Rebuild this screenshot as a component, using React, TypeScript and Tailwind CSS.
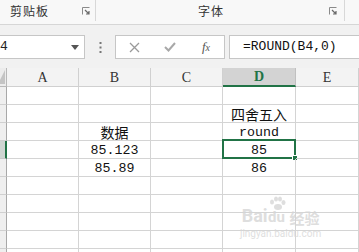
import React from 'react';

const cjk = { fontFamily: '"Noto Sans CJK SC", "Noto Sans", sans-serif' };
const mono = { fontFamily: '"Liberation Mono", "Noto Sans CJK SC", monospace' };
const serif = { fontFamily: '"Liberation Serif", "Noto Sans CJK SC", serif' };

type Cell = { text: string; cjk?: boolean };
const rows: { B?: Cell; D?: Cell }[] = [
  {},
  { D: { text: '四舍五入', cjk: true } },
  { B: { text: '数据', cjk: true }, D: { text: 'round' } },
  { B: { text: '85.123' }, D: { text: '85' } },
  { B: { text: '85.89' }, D: { text: '86' } },
  {},
  {},
  {},
  {},
  {},
];

function Launcher() {
  return (
    <svg width="8" height="8" viewBox="0 0 8 8" className="shrink-0">
      <path d="M0.5 7.5V0.5H7.5" fill="none" stroke="#8a8a8a" strokeWidth="1" />
      <path d="M3 3L7 7M7 4V7H4" fill="none" stroke="#6a6a6a" strokeWidth="1.2" />
    </svg>
  );
}

function CellText({ cell }: { cell?: Cell }) {
  if (!cell) return null;
  return (
    <span
      className={cell.cjk ? 'text-[14px] leading-[16px] text-[#111]' : 'text-[13.3px] leading-[15px] text-[#111]'}
      style={cell.cjk ? cjk : mono}
    >
      {cell.text}
    </span>
  );
}

export default function App() {
  return (
    <div className="w-[359px] h-[252px] overflow-hidden bg-white relative">
      {/* Ribbon group labels */}
      <div className="h-[25px] flex bg-[#f8f8f8] border-b border-[#d6d6d6]">
        <div className="w-[96px] h-[21px] flex items-center pl-[10px] pr-[5px] border-r border-[#d8d8d8]">
          <span className="text-[12px] text-[#333] tracking-[1px] flex-1" style={cjk}>剪贴板</span>
          <Launcher />
        </div>
        <div className="w-[249px] h-[21px] flex items-center pl-[102px] pr-[7px] border-r border-[#d8d8d8]">
          <span className="text-[12px] text-[#333] tracking-[1px] flex-1" style={cjk}>字体</span>
          <Launcher />
        </div>
      </div>

      {/* Formula bar */}
      <div className="h-[43px] bg-[#f1f1f1] flex items-start pt-[10px]">
        <div className="w-[85px] h-[24px] bg-white border border-[#c6c6c6] border-l-0 flex items-center justify-between pr-[5px]">
          <span className="text-[13px] text-[#222]" style={mono}>4</span>
          <svg width="8" height="5" viewBox="0 0 8 5"><path d="M0 0H8L4 5Z" fill="#555" /></svg>
        </div>
        <div className="w-[30px] h-[24px] flex items-center justify-center">
          <svg width="3" height="11" viewBox="0 0 3 11">
            <rect x="0.5" y="0" width="2" height="2" fill="#777" />
            <rect x="0.5" y="4.5" width="2" height="2" fill="#777" />
            <rect x="0.5" y="9" width="2" height="2" fill="#777" />
          </svg>
        </div>
        <div className="w-[110px] h-[24px] bg-white border border-[#c6c6c6] flex items-center">
          <div className="w-[36px] flex justify-center">
            <svg width="11" height="11" viewBox="0 0 11 11"><path d="M1 1L10 10M10 1L1 10" stroke="#9a9a9a" strokeWidth="1.3" /></svg>
          </div>
          <div className="w-[36px] flex justify-center">
            <svg width="12" height="10" viewBox="0 0 12 10"><path d="M1 5L4.5 8.5L11 1" fill="none" stroke="#a8a8a8" strokeWidth="2" /></svg>
          </div>
          <div className="w-[36px] flex justify-center">
            <span className="text-[13px] italic text-[#555]" style={serif}>f<span className="text-[10px]">x</span></span>
          </div>
        </div>
        <div className="w-[4px]" />
        <div className="flex-1 h-[24px] bg-white border border-[#c6c6c6] border-r-0 flex items-center pl-[13px]">
          <span className="text-[13px] text-[#111]" style={mono}>=ROUND(B4,0)</span>
        </div>
      </div>

      {/* Sheet */}
      <div className="grid grid-cols-[7px_72px_72px_72px_73px_1fr]">
        {/* header row */}
        <div className="h-[19px] bg-[#ececec] border-r border-b border-[#b8b8b8] relative overflow-hidden">
          <svg width="7" height="14" viewBox="0 0 7 14" className="absolute right-[1px] bottom-[2px]"><path d="M7 0V14H0Z" fill="#c4c4c4" /></svg>
        </div>
        {['A', 'B', 'C', 'D', 'E'].map((c) => (
          <div
            key={c}
            className={
              c === 'D'
                ? 'h-[19px] bg-[#d3d3d3] border-r border-[#c0c0c0] border-b-2 border-b-[#217346] flex items-center justify-center'
                : 'h-[19px] bg-[#f3f3f3] border-r border-b border-[#d0d0d0] flex items-center justify-center'
            }
          >
            <span
              className={c === 'D' ? 'text-[14px] font-bold text-[#217346]' : 'text-[14px] text-[#333]'}
              style={serif}
            >
              {c}
            </span>
          </div>
        ))}

        {rows.map((r, i) => {
          const sel = i === 3;
          return (
            <React.Fragment key={i}>
              <div
                className={
                  sel
                    ? 'h-[18px] bg-[#cfd6d2] border-b border-[#c8c8c8] border-r-2 border-r-[#217346]'
                    : 'h-[18px] bg-[#efefef] border-b border-[#d0d0d0] border-r border-r-[#a8a8a8]'
                }
              />
              {(['A', 'B', 'C', 'D', 'E'] as const).map((c) => (
                <div
                  key={c}
                  className="h-[18px] border-r border-b border-[#d4d4d4] flex items-end justify-center relative"
                >
                  <CellText cell={(r as Record<string, Cell | undefined>)[c]} />
                  {sel && c === 'D' && (
                    <div className="absolute -left-[1px] -top-[2px] -right-[1px] -bottom-[1px] border-2 border-[#217346]">
                      <div className="absolute -right-[4px] -bottom-[4px] w-[6px] h-[6px] bg-[#217346] border border-white" />
                    </div>
                  )}
                </div>
              ))}
            </React.Fragment>
          );
        })}
      </div>

      {/* Baidu watermark overlay */}
      <div className="absolute left-[240px] top-[196px] flex flex-col items-center opacity-80 pointer-events-none">
        <div className="flex items-end">
          <span className="text-[18px] font-bold text-[#d6d6d6] leading-none" style={{ fontFamily: 'Roboto, sans-serif' }}>Bai</span>
          <div className="flex flex-col items-center">
            <svg width="18" height="14" viewBox="0 0 18 14">
              <ellipse cx="4" cy="6" rx="2" ry="2.6" fill="#d6d6d6" />
              <ellipse cx="8" cy="3" rx="2" ry="2.6" fill="#d6d6d6" />
              <ellipse cx="12" cy="3" rx="2" ry="2.6" fill="#d6d6d6" />
              <ellipse cx="15.5" cy="6.5" rx="2" ry="2.6" fill="#d6d6d6" />
              <ellipse cx="10" cy="11" rx="4" ry="3" fill="#d6d6d6" />
            </svg>
            <span className="text-[15px] font-bold text-[#d6d6d6] leading-none" style={{ fontFamily: 'Roboto, sans-serif' }}>du</span>
          </div>
          <span className="text-[15px] font-bold text-[#d6d6d6] leading-none ml-[4px]" style={cjk}>经验</span>
        </div>
        <span className="text-[10px] text-[#d8d8d8] leading-[12px] mt-[3px]" style={{ fontFamily: 'Roboto, sans-serif' }}>jingyan.baidu.com</span>
      </div>
    </div>
  );
}
